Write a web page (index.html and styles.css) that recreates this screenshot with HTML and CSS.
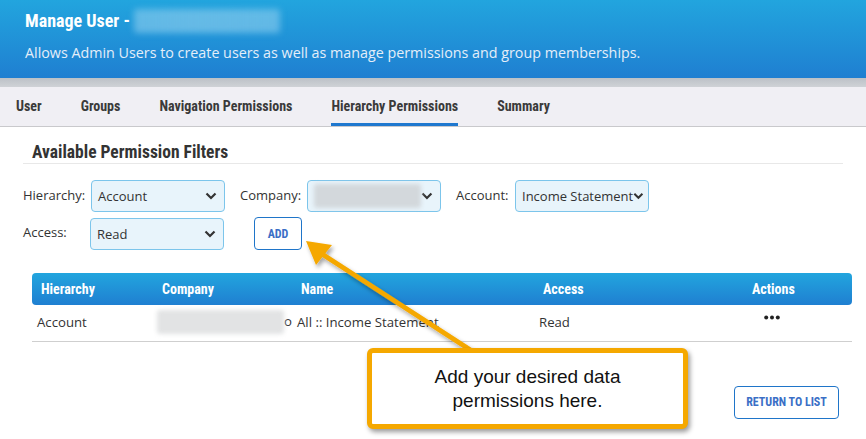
FILE: index.html
```html
<!DOCTYPE html>
<html>
  <head>
    <title>Manage User</title>
    <link rel="stylesheet" href="styles.css">
  </head>
  <body>
    <div class="page">
      <header class="page-header">
        <h1>Manage User - <span class="blur blur-title"></span></h1>
        <p>Allows Admin Users to create users as well as manage permissions and group memberships.</p>
      </header>
      <div class="band"></div>

      <nav class="tabs">
        <a class="tab">User</a>
        <a class="tab">Groups</a>
        <a class="tab">Navigation Permissions</a>
        <a class="tab active">Hierarchy Permissions</a>
        <a class="tab">Summary</a>
      </nav>

      <section class="filters">
        <h2>Available Permission Filters</h2>

        <div class="form-row">
          <label class="lbl lbl-hier">Hierarchy:</label>
          <div class="select"><span>Account</span>
            <svg class="chev" width="12" height="8" viewBox="0 0 12 8"><path d="M1.5 1.5 6 6l4.5-4.5" fill="none" stroke="#333" stroke-width="2.2"/></svg>
          </div>
          <label class="lbl lbl-comp">Company:</label>
          <div class="select"><span class="blur blur-select"></span>
            <svg class="chev" width="12" height="8" viewBox="0 0 12 8"><path d="M1.5 1.5 6 6l4.5-4.5" fill="none" stroke="#333" stroke-width="2.2"/></svg>
          </div>
          <label class="lbl lbl-acct">Account:</label>
          <div class="select select-tight"><span>Income Statement</span>
            <svg class="chev" width="12" height="8" viewBox="0 0 12 8"><path d="M1.5 1.5 6 6l4.5-4.5" fill="none" stroke="#333" stroke-width="2.2"/></svg>
          </div>
        </div>

        <div class="form-row">
          <label class="lbl lbl-access">Access:</label>
          <div class="select"><span>Read</span>
            <svg class="chev" width="12" height="8" viewBox="0 0 12 8"><path d="M1.5 1.5 6 6l4.5-4.5" fill="none" stroke="#333" stroke-width="2.2"/></svg>
          </div>
          <button type="button" class="btn btn-add">ADD</button>
        </div>
      </section>

      <table class="grid">
        <thead>
          <tr>
            <th class="c1">Hierarchy</th>
            <th class="c2">Company</th>
            <th class="c3">Name</th>
            <th class="c4">Access</th>
            <th class="c5">Actions</th>
          </tr>
        </thead>
        <tbody>
          <tr>
            <td>Account</td>
            <td class="comp"><span class="blur blur-cell"></span>o</td>
            <td>All :: Income Statement</td>
            <td>Read</td>
            <td class="dots">
              <svg width="16" height="13" viewBox="0 0 16 13"><circle cx="2.2" cy="2.5" r="2" fill="#222"/><circle cx="8" cy="2.5" r="2" fill="#222"/><circle cx="13.8" cy="2.5" r="2" fill="#222"/></svg>
            </td>
          </tr>
        </tbody>
      </table>

      <div class="footer">
        <button type="button" class="btn btn-return">RETURN TO LIST</button>
      </div>

      <!-- tutorial callout drawn over the page -->
      <svg class="arrow" width="866" height="439" viewBox="0 0 866 439">
        <defs>
          <filter id="shadow" x="-20%" y="-20%" width="140%" height="140%">
            <feDropShadow dx="2" dy="3" stdDeviation="2" flood-color="#000" flood-opacity="0.35"/>
          </filter>
        </defs>
        <g filter="url(#shadow)">
          <line x1="472" y1="351" x2="322" y2="254" stroke="#f5a800" stroke-width="5"/>
          <polygon points="306,241 332,245 316,265" fill="#f5a800"/>
        </g>
      </svg>
      <div class="callout">Add your desired data<br>permissions here.</div>
    </div>
  </body>
</html>
```

FILE: styles.css
```css
/* Global styles */
body {
  margin: 0;
  padding: 0;
  font-family: "Open Sans", sans-serif;
  font-size: 13px;
  color: #333;
  background: #fff;
}

.page {
  position: relative;
  width: 866px;
  height: 439px;
  overflow: hidden;
}

/* condensed bold used for headings, tabs and buttons */
h1, h2, .tab, th, .btn {
  font-family: "Liberation Sans Narrow", "Roboto Condensed", "Open Sans", sans-serif;
  font-weight: bold;
}

.blur {
  display: inline-block;
  border-radius: 3px;
}

/* Header */
.page-header {
  height: 78px;
  box-sizing: border-box;
  padding: 8px 25px 0;
  background: linear-gradient(#22a5de, #1f7fd1);
  color: #fff;
}

.page-header h1 {
  margin: 0;
  font-size: 18px;
  line-height: 26px;
  display: flex;
  align-items: center;
  gap: 4px;
}

.blur-title {
  width: 146px;
  height: 24px;
  background: linear-gradient(90deg, rgba(150, 210, 240, 0.55), rgba(130, 200, 235, 0.7) 40%, rgba(150, 210, 240, 0.55));
  filter: blur(3px);
}

.page-header p {
  margin: 9px 0 0;
  font-size: 14.3px;
  color: #e4eef9;
}

.band {
  height: 9px;
  background: linear-gradient(#bcc1c7, #cfd2d6);
}

/* Tabs */
.tabs {
  display: flex;
  gap: 39px;
  height: 39px;
  padding-left: 16px;
  background: #f0eff4;
  border-bottom: 1px solid #c9c9cc;
}

.tab {
  display: flex;
  align-items: center;
  font-size: 14px;
  color: #3a3a3a;
  border-bottom: 3px solid transparent;
  padding-top: 2px;
}

.tab.active {
  border-bottom-color: #1f78cf;
}

/* Filters */
.filters {
  padding: 14px 23px 0;
}

.filters h2 {
  margin: 0;
  width: 811px;
  padding-left: 9px;
  font-size: 17.5px;
  line-height: 22px;
  color: #333;
  border-bottom: 1px solid #e8e8e8;
}

.form-row {
  display: flex;
  align-items: center;
  margin-top: 16px;
  height: 32px;
}

.form-row + .form-row {
  margin-top: 5px;
  height: 33px;
}

.lbl {
  font-size: 13px;
  color: #333;
  margin-top: -3px;
}

.lbl-hier { width: 68px; }
.lbl-comp { width: 67px; margin-left: 15px; }
.lbl-acct { width: 59px; margin-left: 15px; }
.lbl-access { width: 67px; }

.select {
  display: flex;
  align-items: center;
  justify-content: space-between;
  box-sizing: border-box;
  width: 134px;
  height: 32px;
  padding: 0 7px 0 6px;
  background: #e8f4fb;
  border: 1px solid #7cc5eb;
  border-radius: 4px;
  font-size: 13px;
  color: #333;
}

.select-tight {
  padding-left: 6px;
  padding-right: 4px;
  white-space: nowrap;
}

.select-tight span {
  flex: 1;
}

.blur-select {
  width: 108px;
  height: 24px;
  background: #d3d8dc;
  filter: blur(2px);
}

.btn {
  background: #fff;
  border: 1px solid #1f75c9;
  border-radius: 4px;
  color: #3b6fc6;
  font-size: 12px;
  cursor: pointer;
}

.btn-add {
  width: 48px;
  height: 33px;
  margin-left: 30px;
}

/* Table */
.grid {
  margin: 23px 0 0 32px;
  width: 820px;
  border-collapse: collapse;
  table-layout: fixed;
}

.grid thead tr {
  background: linear-gradient(#22a5de, #1f7fd1);
}

.grid th {
  box-sizing: border-box;
  height: 32px;
  padding: 0 0 0 9px;
  text-align: left;
  font-size: 14px;
  color: #fff;
}

.grid th:first-child { border-radius: 4px 0 0 4px; }
.grid th:last-child { border-radius: 0 4px 4px 0; }

.c1 { width: 121px; }
.c2 { width: 139px; }
.c3 { width: 242px; }
.c4 { width: 209px; }
.c5 { width: 109px; }

.grid td {
  height: 36px;
  padding: 0 0 2px 5px;
  box-sizing: border-box;
  font-size: 13.2px;
  color: #333;
  white-space: nowrap;
  border-bottom: 1px solid #cfcfcf;
}

.grid td.comp {
  padding-left: 4px;
}

.blur-cell {
  width: 127px;
  height: 24px;
  vertical-align: middle;
  background: #e2e3e4;
  filter: blur(2px);
}

.grid td.dots {
  padding-left: 21px;
}

.grid td.dots svg {
  display: block;
}

/* Footer */
.footer {
  display: flex;
  justify-content: flex-end;
  padding: 44px 27px 0 0;
}

.btn-return {
  width: 105px;
  height: 33px;
}

/* Tutorial overlay */
.arrow {
  position: absolute;
  left: 0;
  top: 0;
}

.callout {
  position: absolute;
  left: 367px;
  top: 348px;
  width: 321px;
  height: 81px;
  box-sizing: border-box;
  display: flex;
  align-items: center;
  justify-content: center;
  text-align: center;
  background: #fff;
  border: 5px solid #f5a800;
  border-radius: 6px;
  box-shadow: 2px 3px 5px rgba(0, 0, 0, 0.4);
  font-family: "Liberation Sans", Arial, sans-serif;
  font-size: 19px;
  line-height: 24px;
  color: #111;
}
```
